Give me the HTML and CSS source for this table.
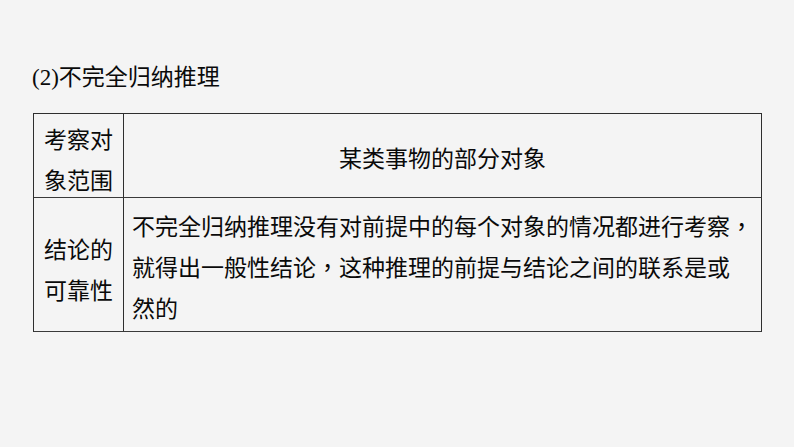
FILE: index.html
```html
<!DOCTYPE html>
<html lang="zh-CN">
<head>
<meta charset="utf-8">
<link rel="stylesheet" href="styles.css">
</head>
<body>
<div class="page">
  <div class="title"><span class="num">(2)</span>不完全归纳推理</div>
  <div class="grid">
    <div class="cell label r1">考察对<br>象范围</div>
    <div class="cell center r1">某类事物的部分对象</div>
    <div class="cell label r2">结论的<br>可靠性</div>
    <div class="cell body r2">不完全归纳推理没有对前提中的每个对象的情况都进行考察<span class="p" lang="zh-Hant">，</span><br>就得出一般性结论<span class="p" lang="zh-Hant">，</span>这种推理的前提与结论之间的联系是或<br>然的</div>
  </div>
</div>
</body>
</html>
```

FILE: styles.css
```css
html, body {
  margin: 0;
  padding: 0;
  background: #f4f4f4;
}
.page {
  width: 794px;
  height: 447px;
  padding: 63px 0 0 32px;
  box-sizing: border-box;
  font-family: "Noto Sans CJK SC", "Microsoft YaHei", sans-serif;
  color: #0a0a0a;
}
.title {
  font-size: 23px;
  line-height: 24px;
  height: 24px;
}
.title .num {
  font-family: "Liberation Serif", serif;
}
.grid {
  margin-top: 26px;
  margin-left: 1px;
  width: 729px;
  box-sizing: border-box;
  border-top: 1px solid #2e2e2e;
  border-left: 1px solid #2e2e2e;
  display: grid;
  grid-template-columns: 90px 638px;
  grid-template-rows: 84px 134px;
  font-size: 23px;
}
.cell {
  box-sizing: border-box;
  border-right: 1px solid #2e2e2e;
  border-bottom: 1px solid #3a3a3a;
  line-height: 41px;
  white-space: nowrap;
}
.label {
  padding: 4px 0 0 10px;
}
.label.r2 {
  padding-top: 30px;
}
.center {
  text-align: center;
  line-height: 82px;
  padding-top: 2px;
}
.body {
  padding: 7px 0 0 8px;
}
.p {
  font-family: "Noto Sans CJK TC", sans-serif;
}
```
